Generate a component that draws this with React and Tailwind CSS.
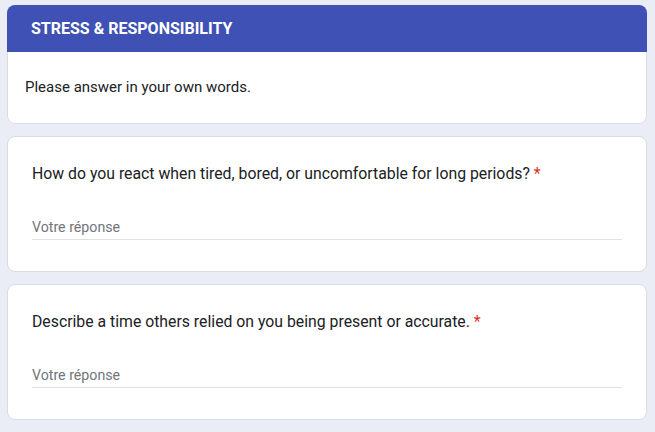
import React from "react";

const Question = ({ label }) => {
  return (
    <div className="bg-white border border-[#dadce0] rounded-lg pt-[25px] pb-[31px] px-6">
      <p className="text-[15.8px] leading-6 text-[#202124]">
        {label} <span className="text-[#d93025]">*</span>
      </p>
      <div className="mt-[29px] border-b border-[#e0e0e0] h-[25px] w-[590px] flex items-center">
        <p className="text-[14.2px] leading-5 text-[#70757a]">Votre réponse</p>
      </div>
    </div>
  );
};

const App = () => {
  return (
    <div
      className="min-h-screen bg-[#ebedf6] pt-[5px] px-[7px] pb-6"
      style={{ fontFamily: "Roboto, 'Liberation Sans', sans-serif" }}
    >
      <div className="w-[640px] flex flex-col gap-3">
        {/* section header */}
        <div className="rounded-lg overflow-hidden">
          <div className="h-[47px] bg-[#3f51b5] flex items-center px-6">
            <h2 className="text-white font-bold text-[16px]">
              STRESS &amp; RESPONSIBILITY
            </h2>
          </div>
          <div className="h-[72px] bg-white border border-t-0 border-[#dadce0] rounded-b-lg flex items-center pl-[17px]">
            <p className="text-[15px] text-[#202124]">Please answer in your own words.</p>
          </div>
        </div>

        <Question label="How do you react when tired, bored, or uncomfortable for long periods?" />
        <Question label="Describe a time others relied on you being present or accurate." />

        <div className="flex gap-4 pl-px">
          <button className="w-[90px] h-9 bg-[#f1f2f8] rounded" />
          <button className="w-[96px] h-9 bg-[#f1f2f8] rounded" />
        </div>
      </div>
    </div>
  );
};

export default App;
